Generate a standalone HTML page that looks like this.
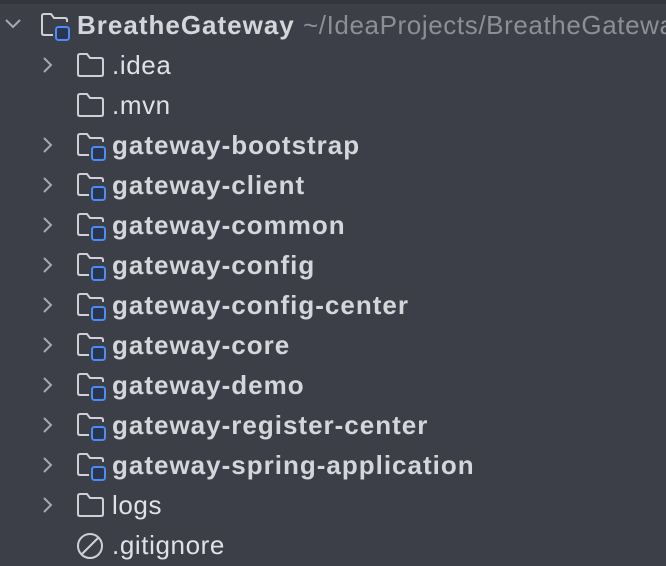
<!DOCTYPE html>
<html><head><style>
body{margin:0;width:666px;height:566px;background:#3c3f47;overflow:hidden;font-family:"Liberation Sans",sans-serif;position:relative}
.top{position:absolute;left:0;top:0;width:666px;height:4px;background:#33363c}
.row{position:absolute;height:40px;left:0;width:666px}
.row svg{position:absolute}
.t{position:absolute;top:5px;font-size:26px;color:#dfe1e5;white-space:nowrap;line-height:30px;letter-spacing:0.6px}
.b{font-weight:bold;color:#d4d6da;letter-spacing:1px}
.p{color:#8c8f96;font-weight:normal;letter-spacing:0.6px}
</style></head><body>
<div class="top"></div>
<svg width="0" height="0" style="position:absolute">
<defs>
<symbol id="chev" viewBox="0 0 12 18"><path d="M2 2 L9 9 L2 16" fill="none" stroke="#a6a9af" stroke-width="2"/></symbol>
<symbol id="fold" viewBox="0 0 28 24"><path d="M2 3 Q2 1 4 1 H11 L14 5 H25 Q27 5 27 7 V21 Q27 23 25 23 H4 Q2 23 2 21 Z" fill="none" stroke="#ced0d6" stroke-width="2"/></symbol>
<symbol id="mod" viewBox="0 0 32 30"><path d="M13 22 H4 Q2 22 2 20 V3 Q2 1 4 1 H11 L14 5 H25 Q27 5 27 7 V9" fill="none" stroke="#ced0d6" stroke-width="2"/><rect x="16" y="14" width="13" height="13" rx="2.5" fill="#2a3550" stroke="#4b8cf5" stroke-width="2"/></symbol>
</defs></svg>

<div class="row" style="top:5px">
<svg style="left:4px;top:13px" width="18" height="12" viewBox="0 0 18 12"><path d="M2 2 L9 9 L16 2" fill="none" stroke="#a6a9af" stroke-width="2"/></svg>
<svg style="left:40px;top:8px" width="32" height="30"><use href="#mod"/></svg>
<div class="t b" style="left:77px">BreatheGateway <span class="p">~/IdeaProjects/BreatheGateway</span></div>
</div>

<div class="row" style="top:45px"><svg style="left:42px;top:11px" width="12" height="18"><use href="#chev"/></svg><svg style="left:76px;top:8px" width="28" height="24"><use href="#fold"/></svg><div class="t" style="left:112px">.idea</div></div>
<div class="row" style="top:85px"><svg style="left:76px;top:8px" width="28" height="24"><use href="#fold"/></svg><div class="t" style="left:112px">.mvn</div></div>

<div class="row" style="top:125px"><svg style="left:42px;top:11px" width="12" height="18"><use href="#chev"/></svg><svg style="left:76px;top:8px" width="32" height="30"><use href="#mod"/></svg><div class="t b" style="left:112px">gateway-bootstrap</div></div>
<div class="row" style="top:165px"><svg style="left:42px;top:11px" width="12" height="18"><use href="#chev"/></svg><svg style="left:76px;top:8px" width="32" height="30"><use href="#mod"/></svg><div class="t b" style="left:112px">gateway-client</div></div>
<div class="row" style="top:205px"><svg style="left:42px;top:11px" width="12" height="18"><use href="#chev"/></svg><svg style="left:76px;top:8px" width="32" height="30"><use href="#mod"/></svg><div class="t b" style="left:112px">gateway-common</div></div>
<div class="row" style="top:245px"><svg style="left:42px;top:11px" width="12" height="18"><use href="#chev"/></svg><svg style="left:76px;top:8px" width="32" height="30"><use href="#mod"/></svg><div class="t b" style="left:112px">gateway-config</div></div>
<div class="row" style="top:285px"><svg style="left:42px;top:11px" width="12" height="18"><use href="#chev"/></svg><svg style="left:76px;top:8px" width="32" height="30"><use href="#mod"/></svg><div class="t b" style="left:112px">gateway-config-center</div></div>
<div class="row" style="top:325px"><svg style="left:42px;top:11px" width="12" height="18"><use href="#chev"/></svg><svg style="left:76px;top:8px" width="32" height="30"><use href="#mod"/></svg><div class="t b" style="left:112px">gateway-core</div></div>
<div class="row" style="top:365px"><svg style="left:42px;top:11px" width="12" height="18"><use href="#chev"/></svg><svg style="left:76px;top:8px" width="32" height="30"><use href="#mod"/></svg><div class="t b" style="left:112px">gateway-demo</div></div>
<div class="row" style="top:405px"><svg style="left:42px;top:11px" width="12" height="18"><use href="#chev"/></svg><svg style="left:76px;top:8px" width="32" height="30"><use href="#mod"/></svg><div class="t b" style="left:112px">gateway-register-center</div></div>
<div class="row" style="top:445px"><svg style="left:42px;top:11px" width="12" height="18"><use href="#chev"/></svg><svg style="left:76px;top:8px" width="32" height="30"><use href="#mod"/></svg><div class="t b" style="left:112px">gateway-spring-application</div></div>

<div class="row" style="top:485px"><svg style="left:42px;top:11px" width="12" height="18"><use href="#chev"/></svg><svg style="left:76px;top:8px" width="28" height="24"><use href="#fold"/></svg><div class="t" style="left:112px">logs</div></div>
<div class="row" style="top:525px"><svg style="left:76px;top:7px" width="28" height="28" viewBox="0 0 28 28"><circle cx="14" cy="14" r="12" fill="none" stroke="#ced0d6" stroke-width="2"/><path d="M5.5 22.5 L22.5 5.5" stroke="#ced0d6" stroke-width="2"/></svg><div class="t" style="left:112px">.gitignore</div></div>
</body></html>
